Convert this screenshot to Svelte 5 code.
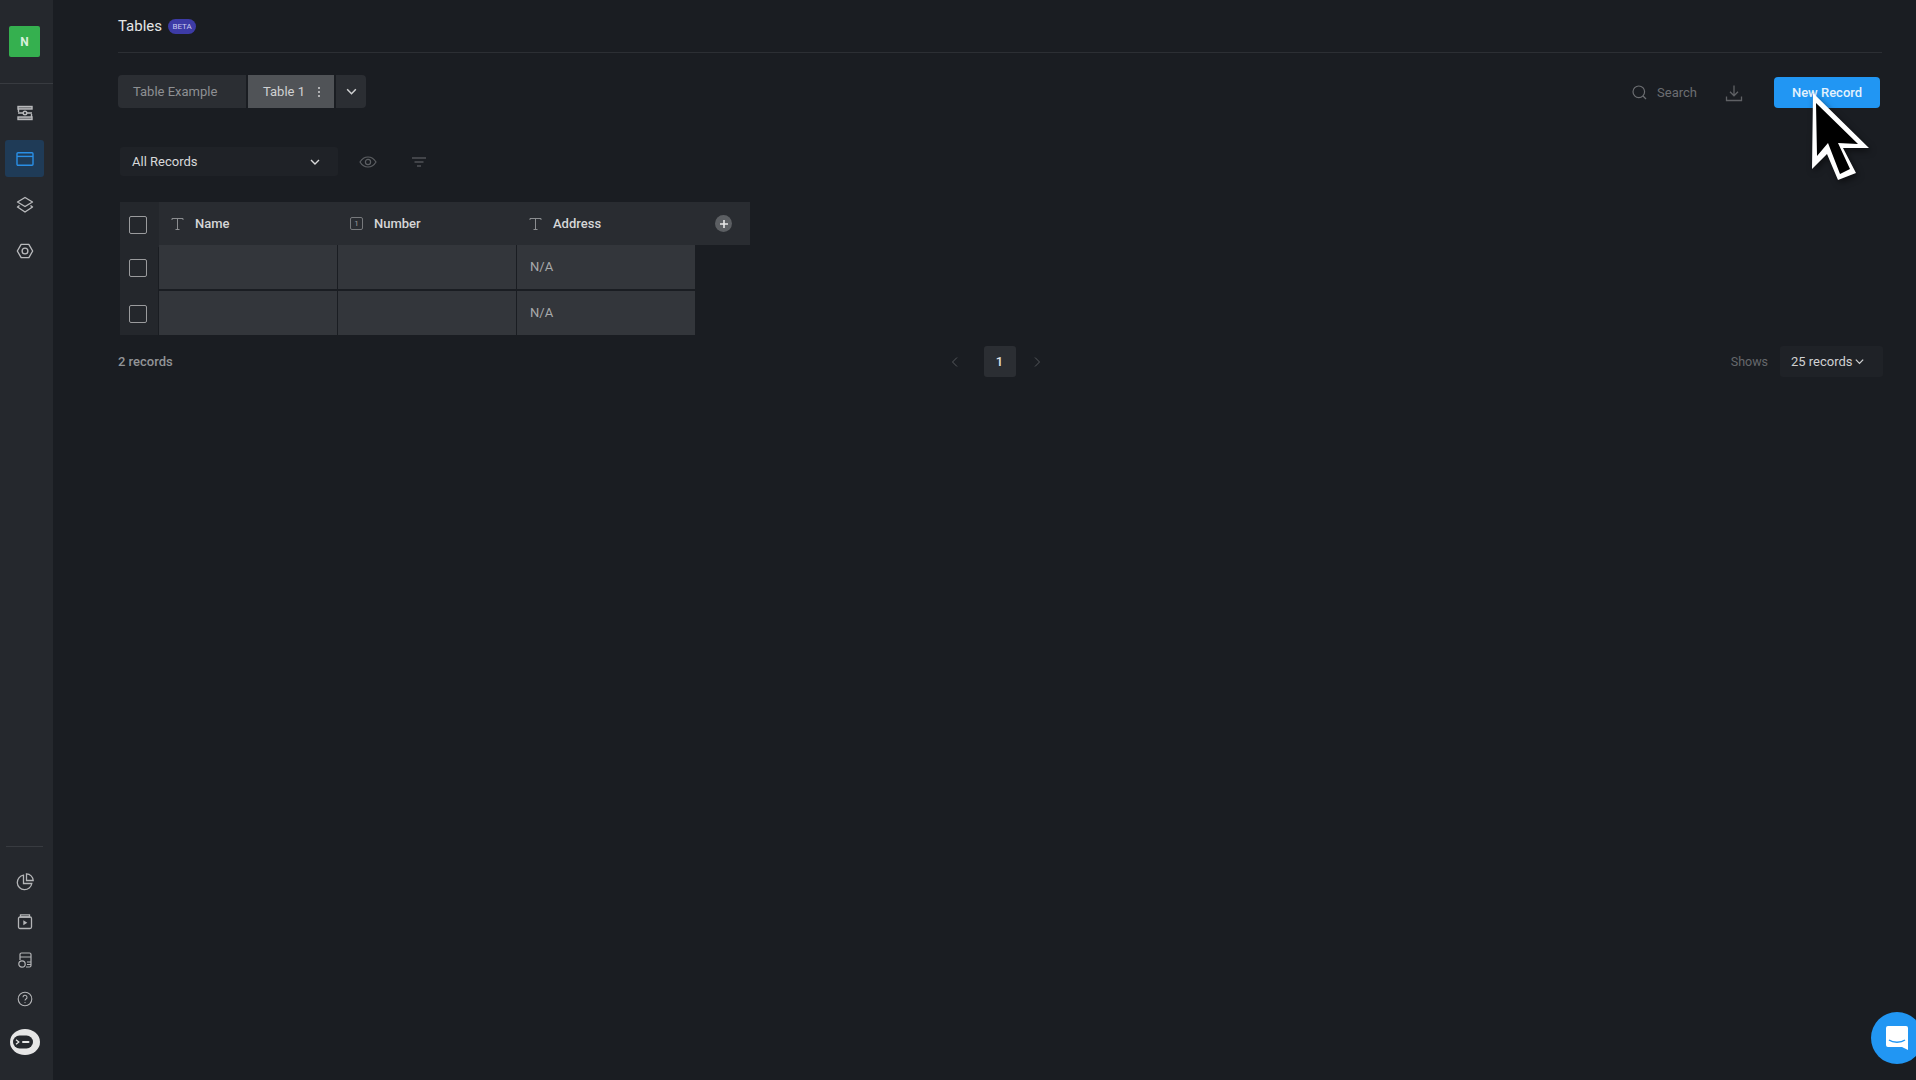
<script>
	const columns = [
		{ name: 'Name', kind: 'text' },
		{ name: 'Number', kind: 'number' },
		{ name: 'Address', kind: 'text' }
	];
	const rows = [
		['', '', 'N/A'],
		['', '', 'N/A']
	];
</script>

{#snippet chevron(size)}
	<svg width={size} height={size} viewBox="0 0 12 12" fill="none" stroke="currentColor" stroke-width="1.4"><path d="M2 4l4 4 4-4" /></svg>
{/snippet}

<div class="page">
	<aside class="sidebar">
		<div class="logo">N</div>
		<hr class="side-rule top" />
		<nav class="nav">
			<a class="nav-item" href="#flows" aria-label="Flows">
				<svg width="18" height="18" viewBox="0 0 18 18" fill="none" stroke="currentColor" stroke-width="1.4">
					<rect x="2" y="2.500" width="14" height="2.500" fill="currentColor" fill-opacity=".5" />
					<rect x="2" y="13" width="14" height="2.500" fill="currentColor" fill-opacity=".5" />
					<path d="M2 9h5M11 9h5M2.500 5v3M15.500 10v3" />
					<circle cx="9" cy="9" r="1.800" />
				</svg>
			</a>
			<a class="nav-item active" href="#tables" aria-label="Tables">
				<svg width="20" height="18" viewBox="0 0 20 18" fill="none" stroke="currentColor" stroke-width="1.4">
					<rect x="2" y="2.700" width="16" height="12.600" rx="1" />
					<path d="M2 6.400h16" />
				</svg>
			</a>
			<a class="nav-item" href="#layers" aria-label="Layers">
				<svg width="20" height="20" viewBox="0 0 20 20" fill="none" stroke="currentColor" stroke-width="1.4" stroke-linejoin="round">
					<path d="M10 2.500l7.500 4.500-7.500 4.500L2.500 7z" />
					<path d="M4.500 10.500L2.500 12l7.500 5 7.500-5-2-1.500" />
				</svg>
			</a>
			<a class="nav-item" href="#settings" aria-label="Settings">
				<svg width="18" height="18" viewBox="0 0 20 20" fill="none" stroke="currentColor" stroke-width="1.500" stroke-linejoin="round">
					<path d="M10 1.500l7.400 4.250v8.500L10 18.500l-7.400-4.250v-8.500z" transform="rotate(30 10 10)" />
					<circle cx="10" cy="10" r="3.200" />
				</svg>
			</a>
		</nav>
		<div class="side-bottom">
			<hr class="side-rule" />
			<a class="foot-item first" href="#stats" aria-label="Statistics">
				<svg width="20" height="20" viewBox="0 0 20 20" fill="none" stroke="currentColor" stroke-width="1.300">
					<path d="M8.500 3.200a7.300 7.300 0 1 0 8.300 8.300H8.500z" />
					<path d="M11.500 1.800a7 7 0 0 1 6.700 6.700h-6.700z" />
				</svg>
			</a>
			<a class="foot-item" href="#media" aria-label="Media">
				<svg width="18" height="18" viewBox="0 0 18 18" fill="none" stroke="currentColor" stroke-width="1.300">
					<rect x="2.500" y="5" width="13" height="11.500" rx="1.500" />
					<path d="M4.500 2.800h9v2.200h-9z" />
					<path d="M7.300 8.200l4 2.500-4 2.500z" fill="currentColor" stroke="none" />
				</svg>
			</a>
			<a class="foot-item" href="#billing" aria-label="Billing">
				<svg width="18" height="18" viewBox="0 0 18 18" fill="none" stroke="currentColor" stroke-width="1.200">
					<path d="M4 9V3.500A1.500 1.500 0 0 1 5.500 2h8A1.500 1.500 0 0 1 15 3.500v11a1.500 1.500 0 0 1-1.500 1.500H10" />
					<path d="M4 6h11M11 11h4M11 13.500h4" />
					<circle cx="6" cy="13" r="3.200" />
				</svg>
			</a>
			<a class="foot-item" href="#help" aria-label="Help">
				<svg width="16" height="16" viewBox="0 0 16 16" fill="none" stroke="currentColor" stroke-width="1.100">
					<circle cx="8" cy="8" r="6.800" />
					<path d="M6 6.300a2 2 0 1 1 3 1.700c-.7.400-1 .9-1 1.600" />
					<circle cx="8" cy="11.600" r=".6" fill="currentColor" stroke="none" />
				</svg>
			</a>
			<div class="bot" aria-label="Assistant">
				<svg width="30" height="26" viewBox="0 0 30 26">
					<ellipse cx="15" cy="13" rx="15" ry="13" fill="#e6e6e6" />
					<rect x="3" y="6.500" width="20" height="13" rx="6.500" fill="#25282d" />
					<path d="M6 10.800l2.800 2.200-2.800 2.200" fill="none" stroke="#e6e6e6" stroke-width="1.300" />
					<path d="M13 13h5.500" stroke="#e6e6e6" stroke-width="2" stroke-linecap="round" />
				</svg>
			</div>
		</div>
	</aside>

	<main class="main">
		<header class="title-bar">
			<h1>Tables</h1>
			<span class="beta">BETA</span>
		</header>

		<div class="toolbar">
			<div class="tabs">
				<button class="tab first">Table Example</button>
				<button class="tab current">
					Table 1
					<svg width="4" height="12" viewBox="0 0 4 12" fill="currentColor"><circle cx="2" cy="2" r="1" /><circle cx="2" cy="6" r="1" /><circle cx="2" cy="10" r="1" /></svg>
				</button>
				<button class="tab more" aria-label="More tables">{@render chevron(13)}</button>
			</div>
			<div class="actions">
				<div class="search">
					<svg width="15" height="15" viewBox="0 0 15 15" fill="none" stroke="currentColor" stroke-width="1.200"><circle cx="6.800" cy="6.800" r="5.800" /><path d="M11 11l3 3" /></svg>
					<span>Search</span>
				</div>
				<svg class="download" width="18" height="18" viewBox="0 0 18 18" fill="none" stroke="currentColor" stroke-width="1.300">
					<path d="M9 1.500v10M5 7.800l4 4 4-4M1.500 12.500v4h15v-4" />
				</svg>
				<button class="new-record">New Record</button>
			</div>
		</div>

		<div class="filters">
			<div class="view-select">
				<span>All Records</span>
				{@render chevron(12)}
			</div>
			<svg class="eye" width="18" height="12" viewBox="0 0 18 12" fill="none" stroke="currentColor" stroke-width="1.200">
				<path d="M1 6c2-3.300 4.700-5 8-5s6 1.700 8 5c-2 3.300-4.700 5-8 5S3 9.300 1 6z" />
				<circle cx="9" cy="6" r="2.600" />
			</svg>
			<svg class="filter" width="14" height="10" viewBox="0 0 14 10" fill="none" stroke="currentColor" stroke-width="1.200">
				<path d="M0 1h14M2.500 5h9M5 9h4" />
			</svg>
		</div>

		<div class="table">
			<div class="row head">
				<div class="check"><span class="box"></span></div>
				<div class="head-cells">
					{#each columns as col}
						<div class="head-cell">
							{#if col.kind === 'text'}
								<svg width="13" height="14" viewBox="0 0 13 14" fill="none" stroke="currentColor" stroke-width="1"><path d="M1 3V1.500h11V3M6.500 1.500v11M4.500 12.500h4" /></svg>
							{:else}
								<span class="num-icon">1</span>
							{/if}
							<span>{col.name}</span>
						</div>
					{/each}
					<span class="add">
						<svg width="10" height="10" viewBox="0 0 10 10" stroke="#e8e8e8" stroke-width="1.600"><path d="M5 1v8M1 5h8" /></svg>
					</span>
				</div>
			</div>
			{#each rows as row}
				<div class="row">
					<div class="check"><span class="box"></span></div>
					{#each row as value}
						<div class="cell">{value}</div>
					{/each}
				</div>
			{/each}
		</div>

		<footer class="footer">
			<div class="count">2 records</div>
			<div class="pager">
				<svg class="prev" width="12" height="12" viewBox="0 0 12 12" fill="none" stroke="currentColor" stroke-width="1"><path d="M8 1.500L3.500 6 8 10.500" /></svg>
				<span class="page-no">1</span>
				<svg width="12" height="12" viewBox="0 0 12 12" fill="none" stroke="currentColor" stroke-width="1"><path d="M4 1.500L8.500 6 4 10.500" /></svg>
			</div>
			<div class="per-page">
				<span class="shows">Shows</span>
				<div class="per-select">
					<span>25 records</span>
					{@render chevron(11)}
				</div>
			</div>
		</footer>
	</main>

	<svg class="cursor" width="70" height="100" viewBox="0 0 70 100">
		<polygon points="8,8 7,84 22,69 33,95 51,88 38,63 64,63" fill="#fff" />
		<polygon points="11,18 12,71 23,58 35,89 45,84 33,58 53,59" fill="#000" />
	</svg>

	<div class="chat-bubble">
		<svg width="24" height="26" viewBox="0 0 24 26">
			<path d="M3 1h18a2 2 0 0 1 2 2v22l-6-3H3a2 2 0 0 1-2-2V3a2 2 0 0 1 2-2z" fill="#fff" />
			<path d="M4 15c4 3 12 3 16 0" fill="none" stroke="#2196f3" stroke-width="1.400" />
		</svg>
	</div>
</div>

<style>
	:global(body) {
		margin: 0;
		background: #1a1d22;
		overflow: hidden;
	}

	.page {
		display: flex;
		position: relative;
		width: 1916px;
		height: 1080px;
		overflow: hidden;
		background: #1a1d22;
		font-family: Roboto, "Liberation Sans", sans-serif;
		color: #d8d9da;
	}

	button {
		font: inherit;
		border: 0;
		cursor: pointer;
	}

	/* left rail */
	.sidebar {
		width: 53px;
		flex: none;
		box-sizing: border-box;
		padding-right: 4px;
		display: flex;
		flex-direction: column;
		align-items: center;
		background: #25282d;
	}

	.logo {
		width: 31px;
		height: 31px;
		margin-top: 26px;
		border-radius: 2px;
		background: #35b04f;
		color: #d9f0dd;
		font-size: 12px;
		font-weight: 700;
		display: flex;
		align-items: center;
		justify-content: center;
	}

	.side-rule {
		width: 37px;
		height: 1px;
		margin: 0;
		border: 0;
		background: #383b40;
		flex: none;
	}

	.side-rule.top {
		width: 53px;
		align-self: flex-start;
		margin-top: 26px;
	}

	.nav {
		display: flex;
		flex-direction: column;
		margin-top: 10px;
		gap: 9px;
	}

	.nav-item {
		width: 39px;
		height: 37px;
		border-radius: 3px;
		display: flex;
		align-items: center;
		justify-content: center;
		color: #b9babc;
	}

	.nav-item.active {
		background: #1f3b57;
		color: #2a8fe6;
	}

	.side-bottom {
		margin-top: auto;
		display: flex;
		flex-direction: column;
		align-items: center;
		padding-bottom: 25px;
	}

	.foot-item {
		height: 39px;
		display: flex;
		align-items: center;
		justify-content: center;
		color: #b4b5b7;
	}

	.foot-item.first {
		margin-top: 15px;
	}

	.bot {
		margin-top: 11px;
		height: 26px;
		display: flex;
	}

	/* content */
	.main {
		flex: 1;
		min-width: 0;
		padding: 0 34px 0 65px;
	}

	.title-bar {
		height: 53px;
		display: flex;
		align-items: center;
		gap: 6px;
		box-sizing: border-box;
		border-bottom: 1px solid #2c2f34;
	}

	h1 {
		margin: 0;
		font-size: 15px;
		font-weight: 400;
		color: #e4e5e6;
	}

	.beta {
		width: 28px;
		height: 15px;
		border-radius: 8px;
		background: #3d3ba6;
		color: #c9c9ee;
		font-size: 8px;
		line-height: 15px;
		text-align: center;
	}

	.toolbar {
		display: flex;
		justify-content: space-between;
		align-items: center;
		margin-top: 22px;
		height: 33px;
	}

	.tabs {
		display: flex;
		height: 33px;
		gap: 2px;
	}

	.tab {
		background: #2b2e33;
		color: #8e9093;
		font-size: 13px;
		padding: 0;
	}

	.tab.first {
		width: 128px;
		padding-left: 15px;
		text-align: left;
		border-radius: 4px 0 0 4px;
	}

	.tab.current {
		width: 86px;
		background: #505357;
		color: #d0d1d2;
		display: flex;
		align-items: center;
		gap: 12px;
		padding-left: 15px;
	}

	.tab.more {
		width: 30px;
		border-radius: 0 4px 4px 0;
		color: #d0d1d2;
		display: flex;
		align-items: center;
		justify-content: center;
	}

	.actions {
		display: flex;
		align-items: center;
		padding-right: 2px;
		margin-top: 2px;
	}

	.search {
		display: flex;
		align-items: center;
		gap: 10px;
		font-size: 13px;
		color: #6c6e72;
	}

	.download {
		margin-left: 28px;
		color: #5f6165;
	}

	.new-record {
		width: 106px;
		height: 31px;
		margin-left: 31px;
		border-radius: 4px;
		background: #2196f3;
		color: #e3f2fd;
		font-size: 13px;
		font-weight: 500;
	}

	.filters {
		display: flex;
		align-items: center;
		margin: 39px 0 0 2px;
	}

	.view-select {
		width: 218px;
		height: 29px;
		box-sizing: border-box;
		padding: 0 17px 0 12px;
		display: flex;
		align-items: center;
		justify-content: space-between;
		background: #1f2227;
		border-radius: 3px;
		font-size: 13px;
		color: #d8d9da;
	}

	.eye {
		margin-left: 21px;
		color: #5c5f63;
	}

	.filter {
		margin-left: 35px;
		color: #6a6c70;
	}

	.table {
		margin: 26px 0 0 2px;
		display: flex;
		flex-direction: column;
		gap: 2px;
	}

	.row {
		display: flex;
		height: 44px;
		gap: 1px;
	}

	.row.head {
		height: 43px;
		gap: 0;
		margin-bottom: -2px;
	}

	.check {
		width: 38px;
		box-sizing: border-box;
		padding-left: 9px;
		display: flex;
		align-items: center;
		background: #24272c;
		margin-bottom: -2px;
	}

	.head .check {
		width: 39px;
	}

	.row:last-child .check {
		margin-bottom: 0;
		padding-top: 2px;
	}

	.box {
		width: 16px;
		height: 16px;
		border: 1px solid #9a9b9d;
		border-radius: 2px;
		box-sizing: content-box;
	}

	.head-cells {
		width: 591px;
		display: flex;
		align-items: center;
		background: #292c31;
	}

	.head-cell {
		width: 179px;
		box-sizing: border-box;
		padding-left: 12px;
		display: flex;
		align-items: center;
		gap: 11px;
		font-size: 13px;
		font-weight: 500;
		color: #d5d6d7;
	}

	.head-cell svg {
		color: #8b8d90;
		flex: none;
	}

	.num-icon {
		width: 11px;
		height: 11px;
		border: 1px solid #77797c;
		border-radius: 2px;
		font-size: 8px;
		font-weight: 400;
		line-height: 11px;
		text-align: center;
		color: #9a9b9d;
	}

	.add {
		width: 17px;
		height: 17px;
		margin-left: 19px;
		border-radius: 50%;
		background: #5c5f63;
		display: flex;
		align-items: center;
		justify-content: center;
	}

	.cell {
		width: 178px;
		box-sizing: border-box;
		background: #33363b;
		padding: 0 0 2px 13px;
		display: flex;
		align-items: center;
		font-size: 13px;
		color: #a9aaac;
	}

	.footer {
		display: grid;
		grid-template-columns: 1fr auto 1fr;
		align-items: center;
		height: 31px;
		margin-top: 11px;
	}

	.count {
		font-size: 13px;
		font-weight: 500;
		color: #929497;
	}

	.pager {
		display: flex;
		align-items: center;
		gap: 15px;
		margin-right: 9px;
		color: #55585c;
	}

	.prev {
		margin-right: 8px;
	}

	.page-no {
		width: 32px;
		height: 31px;
		border-radius: 3px;
		background: #2b2e33;
		color: #e0e1e2;
		font-size: 13px;
		font-weight: 500;
		line-height: 31px;
		text-align: center;
	}

	.per-page {
		display: flex;
		justify-content: flex-end;
		align-items: center;
		gap: 12px;
	}

	.shows {
		font-size: 12.500px;
		color: #66686c;
	}

	.per-select {
		width: 103px;
		height: 31px;
		box-sizing: border-box;
		margin-right: -1px;
		padding: 0 11px;
		display: flex;
		align-items: center;
		gap: 1px;
		background: #1f2227;
		border-radius: 3px;
		font-size: 13px;
		color: #d0d1d2;
	}

	/* over the page: the recorded pointer and the support launcher */
	.cursor {
		position: absolute;
		left: 1805px;
		top: 85px;
		filter: drop-shadow(2px 3px 3px rgba(0, 0, 0, 0.5));
	}

	.chat-bubble {
		position: absolute;
		left: 1871px;
		top: 1012px;
		width: 52px;
		height: 52px;
		border-radius: 50%;
		background: #2196f3;
		display: flex;
		align-items: center;
		justify-content: center;
	}
</style>
